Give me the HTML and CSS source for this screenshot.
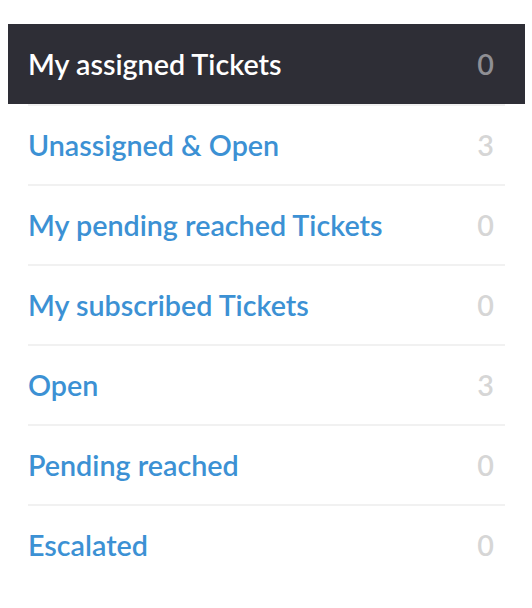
FILE: index.html
```html
<!DOCTYPE html>
<html lang="en">
<head>
    <meta charset="UTF-8">
    <title>Overviews</title>
    <link rel="stylesheet" href="styles.css">
</head>
<body>
<ul class="overviews">
    <li class="overview is-active">
        <a href="#"><span class="name">My assigned Tickets</span><span class="count">0</span></a>
    </li>
    <li class="overview">
        <a href="#"><span class="name">Unassigned &amp; Open</span><span class="count">3</span></a>
    </li>
    <li class="overview">
        <a href="#"><span class="name">My pending reached Tickets</span><span class="count">0</span></a>
    </li>
    <li class="overview">
        <a href="#"><span class="name">My subscribed Tickets</span><span class="count">0</span></a>
    </li>
    <li class="overview">
        <a href="#"><span class="name">Open</span><span class="count">3</span></a>
    </li>
    <li class="overview">
        <a href="#"><span class="name">Pending reached</span><span class="count">0</span></a>
    </li>
    <li class="overview">
        <a href="#"><span class="name">Escalated</span><span class="count">0</span></a>
    </li>
</ul>
</body>
</html>
```
FILE: styles.css
```css
body {
    margin: 0;
    background-color: #fff;
    font-family: "Lato", sans-serif;
}

.overviews {
    list-style: none;
    margin: 24px 0 0 8px;
    padding: 0;
    width: 517px;
}

.overview {
    margin: 0 20px;
    border-bottom: 2px solid #f1f1f1;
}

.overview:last-child {
    border-bottom: none;
}

.overview a {
    display: flex;
    align-items: center;
    justify-content: space-between;
    height: 78px;
    margin: 0 -20px;
    padding: 0 20px;
    text-decoration: none;
    font-size: 28.7px;
    font-weight: 600;
    color: #3c91d4;
}

.overview .count {
    padding-right: 11px;
    color: #d6d6d6;
}

.overview.is-active a {
    height: 80px;
    background-color: #2e2e36;
    color: #fff;
}

.overview.is-active .count {
    color: #8f8f94;
}
```
